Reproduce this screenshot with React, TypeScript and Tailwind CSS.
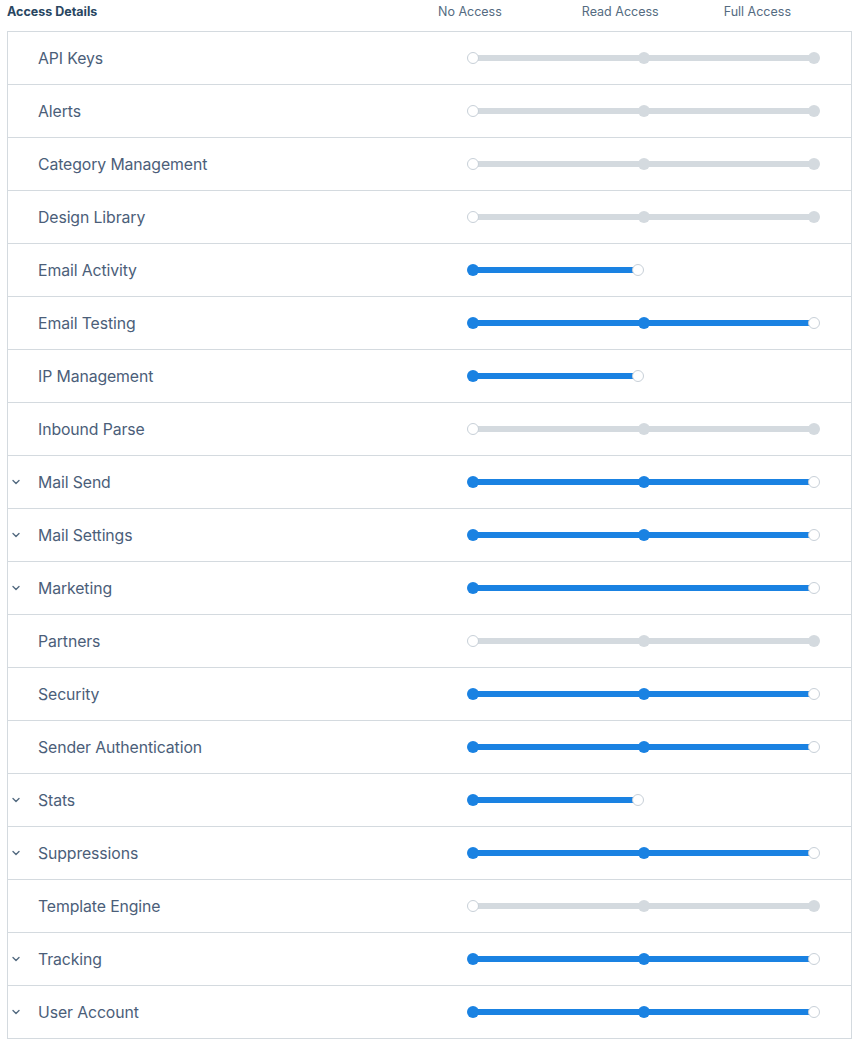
import React from 'react';

type Level = 'off' | 'full' | 'read' | 'wide';

interface Row {
    name: string;
    level: Level;
    expandable?: boolean;
}

const ROWS: Row[] = [
    { name: 'API Keys', level: 'off' },
    { name: 'Alerts', level: 'off' },
    { name: 'Category Management', level: 'off' },
    { name: 'Design Library', level: 'off' },
    { name: 'Email Activity', level: 'read' },
    { name: 'Email Testing', level: 'full' },
    { name: 'IP Management', level: 'read' },
    { name: 'Inbound Parse', level: 'off' },
    { name: 'Mail Send', level: 'full', expandable: true },
    { name: 'Mail Settings', level: 'full', expandable: true },
    { name: 'Marketing', level: 'wide', expandable: true },
    { name: 'Partners', level: 'off' },
    { name: 'Security', level: 'full' },
    { name: 'Sender Authentication', level: 'full' },
    { name: 'Stats', level: 'read', expandable: true },
    { name: 'Suppressions', level: 'full', expandable: true },
    { name: 'Template Engine', level: 'off' },
    { name: 'Tracking', level: 'full', expandable: true },
    { name: 'User Account', level: 'full', expandable: true },
];

const BLUE = '#1a82e2';
const GRAY = '#d4dadf';
const RING = '#c8d0d8';

// x positions inside the slider svg
const START = 7;
const MID = 178;
const END = 348;
const SHORT_END = 172;

const Slider = ({ level }: { level: Level }) => {
    const hollow = (cx: number) => (
        <circle cx={cx} cy={7} r={5.5} fill="#ffffff" stroke={RING} strokeWidth={1} />
    );
    const dot = (cx: number, color: string) => <circle cx={cx} cy={7} r={6} fill={color} />;

    return (
        <svg width={358} height={14} viewBox="0 0 358 14" className="block">
            {level === 'off' && (
                <>
                    <line x1={START} y1={7} x2={END} y2={7} stroke={GRAY} strokeWidth={6} />
                    {dot(MID, GRAY)}
                    {dot(END, GRAY)}
                    {hollow(START)}
                </>
            )}
            {level === 'full' && (
                <>
                    <line x1={START} y1={7} x2={END} y2={7} stroke={BLUE} strokeWidth={6} />
                    {dot(START, BLUE)}
                    {dot(MID, BLUE)}
                    {hollow(END)}
                </>
            )}
            {level === 'wide' && (
                <>
                    <line x1={START} y1={7} x2={END} y2={7} stroke={BLUE} strokeWidth={6} />
                    {dot(START, BLUE)}
                    {hollow(END)}
                </>
            )}
            {level === 'read' && (
                <>
                    <line x1={START} y1={7} x2={SHORT_END} y2={7} stroke={BLUE} strokeWidth={6} />
                    {dot(START, BLUE)}
                    {hollow(SHORT_END)}
                </>
            )}
        </svg>
    );
};

const Chevron = () => (
    <svg width={8} height={6} viewBox="0 0 8 6" className="block">
        <path d="M1 1.5 L4 4.5 L7 1.5" fill="none" stroke="#546b81" strokeWidth={1.4} strokeLinecap="round" strokeLinejoin="round" />
    </svg>
);

export default function App() {
    return (
        <div className="w-[865px] min-h-[1049px] bg-white font-['Inter','Liberation_Sans',sans-serif]">
            <div className="flex items-center h-[31px] pl-[7px] pb-[6px] text-[12.5px] text-[#546b81]">
                <div className="w-[431px] font-bold text-[#294661]">Access Details</div>
                <div>No Access</div>
                <div className="ml-[80px]">Read Access</div>
                <div className="ml-[65px]">Full Access</div>
            </div>
            <div className="ml-[7px] w-[845px] border border-[#d4dadf]">
                {ROWS.map((row, i) => (
                    <div
                        key={row.name}
                        className={
                            i < ROWS.length - 1
                                ? 'flex items-center h-[53px] border-b border-[#d4dadf]'
                                : 'flex items-center h-[52px]'
                        }
                    >
                        <div className="w-[16px] flex justify-center">
                            {row.expandable && <Chevron />}
                        </div>
                        <div className="ml-[14px] mt-[2px] w-[428px] text-[15.8px] text-[#4b5e79] tracking-[-0.1px]">{row.name}</div>
                        <Slider level={row.level} />
                    </div>
                ))}
            </div>
        </div>
    );
}
